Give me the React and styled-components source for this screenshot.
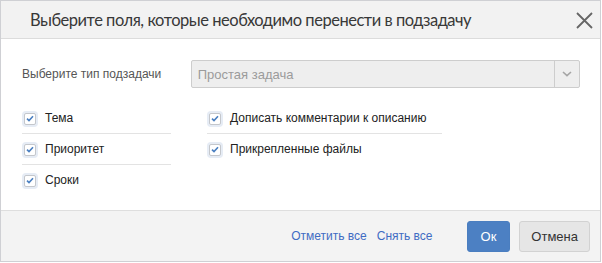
import React from 'react'
import styled, { createGlobalStyle } from 'styled-components'

const GlobalStyle = createGlobalStyle`
  html, body {
    margin: 0;
    padding: 0;
    background: #ffffff;
  }
  body {
    font-family: "Liberation Sans", Arial, sans-serif;
  }
`

const Dialog = styled.div`
  box-sizing: border-box;
  width: 601px;
  height: 262px;
  border: 1px solid #cfd0d4;
  display: flex;
  flex-direction: column;
  background: #fff;
`

const Header = styled.div`
  height: 37px;
  flex: none;
  background: #f2f2f2;
  border-bottom: 1px solid #dcdcdc;
  display: flex;
  align-items: center;
  padding: 0 7px 0 29px;
`

const Title = styled.div`
  flex: 1;
  font-family: Lato, sans-serif;
  font-size: 16.5px;
  letter-spacing: -0.48px;
  color: #383838;
`

const Close = styled.button`
  border: 0;
  background: none;
  padding: 0;
  width: 18px;
  height: 18px;
  margin-top: 1px;
  cursor: pointer;
  display: flex;
  align-items: center;
  justify-content: center;
`

const Body = styled.div`
  flex: 1;
  padding: 21px 20px 0 21px;
`

const FormRow = styled.div`
  display: flex;
  align-items: center;
`

const Label = styled.div`
  width: 169px;
  font-size: 12px;
  color: #555;
`

const Select = styled.div`
  box-sizing: border-box;
  width: 390px;
  height: 28px;
  border: 1px solid #cdcdcd;
  border-radius: 2px;
  background: #eeeeee;
  display: flex;
  align-items: stretch;
`

const SelectValue = styled.div`
  flex: 1;
  display: flex;
  align-items: center;
  padding-left: 6px;
  font-size: 13px;
  color: #9b9b9b;
`

const SelectArrow = styled.div`
  width: 24px;
  border-left: 1px solid #cdcdcd;
  display: flex;
  align-items: center;
  justify-content: center;
`

const Columns = styled.div`
  display: flex;
  margin-top: 15px;
  gap: 36px;
`

const Column = styled.div`
  width: ${p => p.width}px;
  display: flex;
  flex-direction: column;
`

const Row = styled.label`
  height: 30px;
  display: flex;
  align-items: center;
  border-bottom: 1px solid ${p => (p.last ? 'transparent' : '#e3e3e3')};
  font-size: 12px;
  color: #222;
  cursor: pointer;
`

const BoxHalo = styled.span`
  box-sizing: border-box;
  width: 16px;
  height: 16px;
  padding: 2px;
  border-radius: 4px;
  background: #e6ecf5;
  margin-right: 7px;
  margin-top: 1px;
  display: flex;
`

const Box = styled.span`
  box-sizing: border-box;
  width: 12px;
  height: 12px;
  border: 1px solid #c4c7cc;
  border-radius: 2px;
  background: #fff;
  display: flex;
  align-items: center;
  justify-content: center;
`

const Footer = styled.div`
  height: 50px;
  flex: none;
  background: #f3f3f3;
  border-top: 1px solid #dedede;
  display: flex;
  align-items: center;
  justify-content: flex-end;
  padding: 0 10px 0 0;
`

const Link = styled.a`
  font-size: 12px;
  color: #3f6cc3;
  text-decoration: none;
  margin-right: 10px;
  cursor: pointer;
`

const Button = styled.button`
  box-sizing: border-box;
  height: 31px;
  padding: 0 ${p => (p.primary ? 13 : 11)}px;
  border-radius: 3px;
  border: 1px solid ${p => (p.primary ? '#4a7ec0' : '#d2d2d2')};
  background: ${p => (p.primary ? '#4c80c3' : '#e6e6e6')};
  color: ${p => (p.primary ? '#fff' : '#333')};
  font-family: "Liberation Sans", Arial, sans-serif;
  font-size: 13px;
  margin-left: ${p => (p.primary ? 24 : 9)}px;
  cursor: pointer;
`

function Check({ label, last }) {
  return (
    <Row last={last}>
      <BoxHalo>
        <Box>
          <svg width="8" height="7" viewBox="0 0 8 7">
            <path d="M1 3.6 L3 5.6 L7 1.2" fill="none" stroke="#4a7fc1" strokeWidth="1.6" />
          </svg>
        </Box>
      </BoxHalo>
      {label}
    </Row>
  )
}

const left = ['Тема', 'Приоритет', 'Сроки']
const right = ['Дописать комментарии к описанию', 'Прикрепленные файлы']

export default function App() {
  return (
    <>
      <GlobalStyle />
      <Dialog>
        <Header>
          <Title>Выберите поля, которые необходимо перенести в подзадачу</Title>
          <Close>
            <svg width="17" height="17" viewBox="0 0 17 17">
              <path d="M1 1 L16 16 M16 1 L1 16" stroke="#666" strokeWidth="1.8" />
            </svg>
          </Close>
        </Header>
        <Body>
          <FormRow>
            <Label>Выберите тип подзадачи</Label>
            <Select>
              <SelectValue>Простая задача</SelectValue>
              <SelectArrow>
                <svg width="10" height="6" viewBox="0 0 10 6">
                  <path d="M1 1 L5 4.6 L9 1" fill="none" stroke="#a5a5a5" strokeWidth="1.6" />
                </svg>
              </SelectArrow>
            </Select>
          </FormRow>
          <Columns>
            <Column width={149}>
              {left.map((l, i) => (
                <Check key={l} label={l} last={i === left.length - 1} />
              ))}
            </Column>
            <Column width={235}>
              {right.map((l, i) => (
                <Check key={l} label={l} last={i === right.length - 1} />
              ))}
            </Column>
          </Columns>
        </Body>
        <Footer>
          <Link>Отметить все</Link>
          <Link>Снять все</Link>
          <Button primary>Ок</Button>
          <Button>Отмена</Button>
        </Footer>
      </Dialog>
    </>
  )
}
